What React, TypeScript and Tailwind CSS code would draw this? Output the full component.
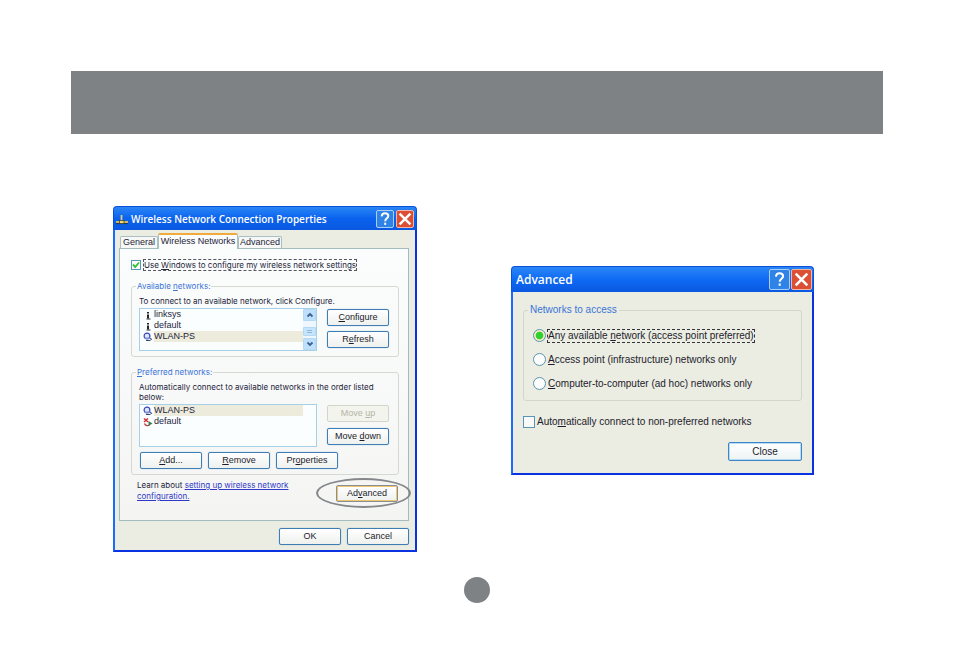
import type { ReactNode } from "react";

const button =
  "flex h-[17px] items-center justify-center rounded-[2px] border border-[#3f7db5] bg-gradient-to-b from-white to-[#eef1ee] text-[9px] leading-[11px] text-[#1c1c2c] shadow-[0_0_1px_#6ba0d0]";

function HelpGlyph() {
  return (
    <svg viewBox="0 0 16 16" className="size-full" fill="none" stroke="white" strokeWidth="2.2">
      <path d="M4.200 5C4.400 2.400 6 1.400 8 1.400c2.300 0 3.800 1.200 3.800 3.100 0 2.600-3.600 2.900-3.600 6" />
      <path d="M8.200 12.200v2.500" />
    </svg>
  );
}

function CloseGlyph() {
  return (
    <svg viewBox="0 0 16 16" className="size-full" fill="none" stroke="white" strokeWidth="2.800">
      <path d="M1.800 1.800l12.400 12.400M14.200 1.800L1.800 14.200" />
    </svg>
  );
}

function NetworkGlyph() {
  return (
    <svg viewBox="0 0 14 12" className="h-3 w-3.5 shrink-0">
      <path d="M1 9h12" stroke="#e3c25a" strokeWidth="1.800" />
      <path d="M1 10.600h12" stroke="#23364f" strokeWidth="1" />
      <path d="M6.500 2v6" stroke="#d9c88a" strokeWidth="1.800" />
      <rect x="4.500" y="7.500" width="4.500" height="3" fill="#f1dc74" stroke="#3c4433" strokeWidth="0.800" />
    </svg>
  );
}

function AntennaIcon() {
  return (
    <svg viewBox="0 0 10 10" className="size-2.5 shrink-0">
      <path d="M4 2h2v1.500H4zM4 4.500h2v4H4z" fill="#222" />
      <path d="M3.500 9h4" stroke="#333" strokeWidth="1" />
    </svg>
  );
}

function ConnectedIcon() {
  return (
    <svg viewBox="0 0 10 10" className="size-2.5 shrink-0">
      <circle cx="4" cy="4" r="2.900" fill="#dfe6ff" stroke="#3a49b8" strokeWidth="1.200" />
      <path d="M1.500 5.500h6v1.500h-6z" fill="#7f92dc" />
      <path d="M3 8.500h4.500M7 6.500l2 1" stroke="#38466e" strokeWidth="1.200" />
    </svg>
  );
}

function BrokenIcon() {
  return (
    <svg viewBox="0 0 10 10" className="size-2.5 shrink-0" fill="none">
      <path d="M1 1.500l4 3.500M5 1.500l-4 3.500" stroke="#d62f36" strokeWidth="1.500" />
      <path d="M1.500 6.500c1 2.500 3.500 2.500 5 1.500" stroke="#c03a40" strokeWidth="1.300" />
      <path d="M5.500 4l4 2.500-4 2.500z" fill="#3e7d50" />
    </svg>
  );
}

function NetworkRow({ icon, name, selected }: { icon: ReactNode; name: string; selected?: boolean }) {
  return (
    <li className="flex h-[11px] items-center gap-px pl-[3px]">
      {icon}
      <span className={selected ? "h-[11px] flex-1 bg-[#ecebdc]" : "flex-1"}>{name}</span>
    </li>
  );
}

function Chevron({ up }: { up?: boolean }) {
  return (
    <svg viewBox="0 0 10 10" className="size-2.5" fill="none" stroke="#3c6294" strokeWidth="1.800">
      <path d={up ? "M2.500 6.500L5 4l2.500 2.500" : "M2.500 3.500L5 6l2.500-2.500"} />
    </svg>
  );
}

const scrollButton =
  "flex h-3 items-center justify-center rounded-[1px] border border-[#b5d8f3] bg-[#bfe0fb]";

function PropertiesDialog() {
  return (
    <section className="w-[304px] text-[9px] leading-[11px] text-[#24243a]">
      <header className="flex h-6 items-center gap-[2px] rounded-t-[4px] border-x border-t border-[#0a50d8] bg-gradient-to-b from-[#2a86f6] via-[#0a62ee] to-[#0a58e0] pr-[2px] pl-px">
        <NetworkGlyph />
        <h1 className="flex-1 font-['Open_Sans',sans-serif] text-[10px] leading-3 font-semibold whitespace-nowrap text-white">
          Wireless Network Connection Properties
        </h1>
        <button aria-label="Help" className="size-[18px] rounded-[2px] border border-[#a9cdf6] bg-[#2f83e6] p-px">
          <HelpGlyph />
        </button>
        <button aria-label="Close" className="size-[18px] rounded-[2px] border border-[#f2b5a5] bg-[#dc4f35] p-px">
          <CloseGlyph />
        </button>
      </header>
      <div className="border-x-2 border-b-2 border-[#0a32e0] border-l-[#1a6cff] bg-[#ebece2] pt-[3px] pr-[6px] pb-[5px] pl-1">
        <nav className="flex h-[15px] items-end pl-px">
          <button className="h-3 w-[38px] rounded-t-[2px] border border-b-0 border-[#a9bfc4] bg-[#f7f8f6]">General</button>
          <button className="relative -mb-px h-4 w-20 rounded-t-[2px] border border-t-2 border-b-0 border-[#a9bfc4] border-t-[#f0ab3c] bg-[#fbfcfc] pb-[2px]">
            Wireless Networks
          </button>
          <button className="h-3 w-11 rounded-t-[2px] border border-b-0 border-[#a9bfc4] bg-[#f7f8f6]">Advanced</button>
        </nav>
        <div className="border border-[#a3bcc0] bg-gradient-to-b from-[#fbfdfd] to-[#f4f5f3] pt-[10px] pr-[9px] pb-[18px] pl-[11px]">
          <div className="flex h-3 items-center gap-[2px]">
            <span className="grid size-[10px]">
              <input
                id="use-windows"
                type="checkbox"
                defaultChecked
                className="col-start-1 row-start-1 size-[10px] appearance-none border border-[#5a95b5] bg-white"
              />
              <svg viewBox="0 0 10 10" className="pointer-events-none col-start-1 row-start-1 size-[10px]" fill="none">
                <path d="M2 4.500L4.200 7 8 2.500" stroke="#35c435" strokeWidth="1.900" />
              </svg>
            </span>
            <label
              htmlFor="use-windows"
              className="border border-dashed border-[#55555f] font-['Inter',sans-serif] text-[8px] leading-[10px] whitespace-nowrap"
            >
              Use <u>W</u>indows to configure my wireless network settings
            </label>
          </div>

          <fieldset className="mt-[10px] rounded-[3px] border border-[#d5d9d2] px-1 pb-[5px]">
            <legend className="px-px font-['Inter',sans-serif] text-[8px] leading-[11px] text-[#3a74d8]">
              Available <u>n</u>etworks:
            </legend>
            <div className="pr-[5px] pl-[3px]">
              <p className="mt-1 font-['Inter',sans-serif] text-[8px] leading-[11px] whitespace-nowrap">
                To connect to an available network, click Configure.
              </p>
              <div className="mt-px flex justify-between">
                <div className="flex h-[43px] w-[178px] border border-[#a6d0e8] bg-[#fbfeff]">
                  <ul className="flex-1">
                    <NetworkRow icon={<AntennaIcon />} name="linksys" />
                    <NetworkRow icon={<AntennaIcon />} name="default" />
                    <NetworkRow icon={<ConnectedIcon />} name="WLAN-PS" selected />
                  </ul>
                  <div className="flex w-[13px] flex-col bg-[#eef7fd]">
                    <button aria-label="Scroll up" className={scrollButton}>
                      <Chevron up />
                    </button>
                    <div className="mt-[6px] flex h-[9px] flex-col items-center justify-center gap-px rounded-[1px] border border-[#b5d8f3] bg-[#c6e4fb]">
                      <span className="h-px w-[5px] bg-[#8cb8de]" />
                      <span className="h-px w-[5px] bg-[#8cb8de]" />
                    </div>
                    <button aria-label="Scroll down" className={`${scrollButton} mt-auto`}>
                      <Chevron />
                    </button>
                  </div>
                </div>
                <div className="flex w-[62px] flex-col gap-[5px] pt-px">
                  <button className={button}>
                    <span>
                      <u>C</u>onfigure
                    </span>
                  </button>
                  <button className={button}>
                    <span>
                      R<u>e</u>fresh
                    </span>
                  </button>
                </div>
              </div>
            </div>
          </fieldset>

          <fieldset className="mt-[10px] rounded-[3px] border border-[#d5d9d2] px-1 pb-[5px]">
            <legend className="px-px font-['Inter',sans-serif] text-[8px] leading-[11px] text-[#3a74d8]">
              <u>P</u>referred networks:
            </legend>
            <div className="pr-[5px] pl-[3px]">
              <p className="mt-1 font-['Inter',sans-serif] text-[8px] leading-[10px] whitespace-nowrap">
                Automatically connect to available networks in the order listed
                <br />
                below:
              </p>
              <div className="mt-[2px] flex justify-between">
                <ul className="h-[43px] w-[178px] border border-[#a6d0e8] bg-[#fbfeff] pr-[13px]">
                  <NetworkRow icon={<ConnectedIcon />} name="WLAN-PS" selected />
                  <NetworkRow icon={<BrokenIcon />} name="default" />
                </ul>
                <div className="flex w-[62px] flex-col gap-[6px] pt-px">
                  <button
                    disabled
                    className="flex h-[17px] items-center justify-center rounded-[2px] border border-[#d3d5c9] bg-[#f3f4ee] text-[#b3b5a6]"
                  >
                    <span>
                      Move <u>u</u>p
                    </span>
                  </button>
                  <button className={button}>
                    <span>
                      Move <u>d</u>own
                    </span>
                  </button>
                </div>
              </div>
              <div className="mt-[5px] grid w-[199px] grid-cols-3 gap-[6px] pl-px">
                <button className={button}>
                  <span>
                    <u>A</u>dd...
                  </span>
                </button>
                <button className={button}>
                  <span>
                    <u>R</u>emove
                  </span>
                </button>
                <button className={button}>
                  <span>
                    Pr<u>o</u>perties
                  </span>
                </button>
              </div>
            </div>
          </fieldset>

          <div className="mt-[5px] flex items-end justify-between pr-px pl-[6px]">
            <p className="h-[22px] font-['Inter',sans-serif] text-[8px] leading-[11px] whitespace-nowrap">
              Learn about{" "}
              <a href="#wireless-setup" className="text-[#3038c8] underline">
                setting up wireless network
                <br />
                configuration.
              </a>
            </p>
            <div className="relative w-[62px]">
              <button className={`${button} w-full border-[#8a8f96] shadow-[inset_0_0_0_1px_#f0c66c]`}>
                <span>
                  Ad<u>v</u>anced
                </span>
              </button>
              <span className="pointer-events-none absolute -top-[7px] -left-5 h-[30px] w-[95px] rounded-[50%] border-2 border-[#85878a]" />
            </div>
          </div>
        </div>
        <div className="mt-[7px] flex justify-end gap-[6px]">
          <button className={`${button} w-[62px]`}>OK</button>
          <button className={`${button} w-[62px]`}>Cancel</button>
        </div>
      </div>
    </section>
  );
}

function AccessOption({ id, checked, children }: { id: string; checked?: boolean; children: ReactNode }) {
  return (
    <div className="flex h-[13px] items-center gap-px">
      <input
        id={id}
        type="radio"
        name="access"
        defaultChecked={checked}
        className="size-[13px] appearance-none rounded-full border border-[#5c93ae] bg-[#fbfdfd] checked:bg-radial checked:from-[#2fd02f] checked:from-45% checked:to-[#f2edc4] checked:to-55%"
      />
      <label
        htmlFor={id}
        className={
          checked
            ? "border border-dashed border-[#33333c] leading-[12px] whitespace-nowrap"
            : "border border-transparent leading-[12px] whitespace-nowrap"
        }
      >
        {children}
      </label>
    </div>
  );
}

function AdvancedDialog() {
  return (
    <section className="mt-[60px] w-[303px] text-[10px] leading-[12px] text-[#1c1c2c]">
      <header className="flex h-[26px] items-center gap-px rounded-t-[4px] border-x border-t border-[#0a50d8] bg-gradient-to-b from-[#2a86f6] via-[#0f6af4] to-[#0a58e0] pr-px pl-1">
        <h2 className="flex-1 pt-px font-['Open_Sans',sans-serif] text-[12px] leading-4 font-semibold text-white">
          Advanced
        </h2>
        <button aria-label="Help" className="size-[21px] rounded-[2px] border border-[#a9cdf6] bg-[#2f83e6] p-[2px]">
          <HelpGlyph />
        </button>
        <button aria-label="Close" className="size-[21px] rounded-[2px] border border-[#f2b5a5] bg-[#dc4f35] p-[2px]">
          <CloseGlyph />
        </button>
      </header>
      <div className="border-x-2 border-b-2 border-[#0a32e0] border-l-[#1a6cff] bg-[#ebece2] px-[10px] pt-3 pb-3">
        <fieldset className="rounded-[3px] border border-[#d3d7cb] px-1 pb-[10px]">
          <legend className="px-[2px] text-[#3a74d8]">Networks to access</legend>
          <div className="mt-[13px] flex flex-col gap-[11px] pl-[5px]">
            <AccessOption id="any-network" checked>
              Any available <u>n</u>etwork (access point preferred)
            </AccessOption>
            <AccessOption id="infrastructure">
              <u>A</u>ccess point (infrastructure) networks only
            </AccessOption>
            <AccessOption id="ad-hoc">
              <u>C</u>omputer-to-computer (ad hoc) networks only
            </AccessOption>
          </div>
        </fieldset>
        <div className="mt-[15px] flex items-center gap-[2px]">
          <input
            id="auto-connect"
            type="checkbox"
            className="size-3 appearance-none border border-[#5a95b5] bg-[#f8fafa]"
          />
          <label htmlFor="auto-connect" className="whitespace-nowrap">
            Auto<u>m</u>atically connect to non-preferred networks
          </label>
        </div>
        <div className="mt-[14px] flex justify-end">
          <button className="h-[19px] w-[74px] rounded-[2px] border border-[#3b86c8] bg-gradient-to-b from-white to-[#edf3f4] shadow-[inset_0_0_0_1px_#b9daf3]">
            Close
          </button>
        </div>
      </div>
    </section>
  );
}

export default function App() {
  return (
    <main className="min-h-screen bg-white px-[71px] pt-[71px] font-['Liberation_Sans',Arial,sans-serif]">
      <div className="h-[63px] bg-[#7f8284]" />
      <div className="mt-[72px] flex items-start justify-between pr-[69px] pl-[42px]">
        <PropertiesDialog />
        <AdvancedDialog />
      </div>
      <div className="mx-auto mt-[25px] size-[26px] rounded-full bg-[#7f8284]" />
    </main>
  );
}
